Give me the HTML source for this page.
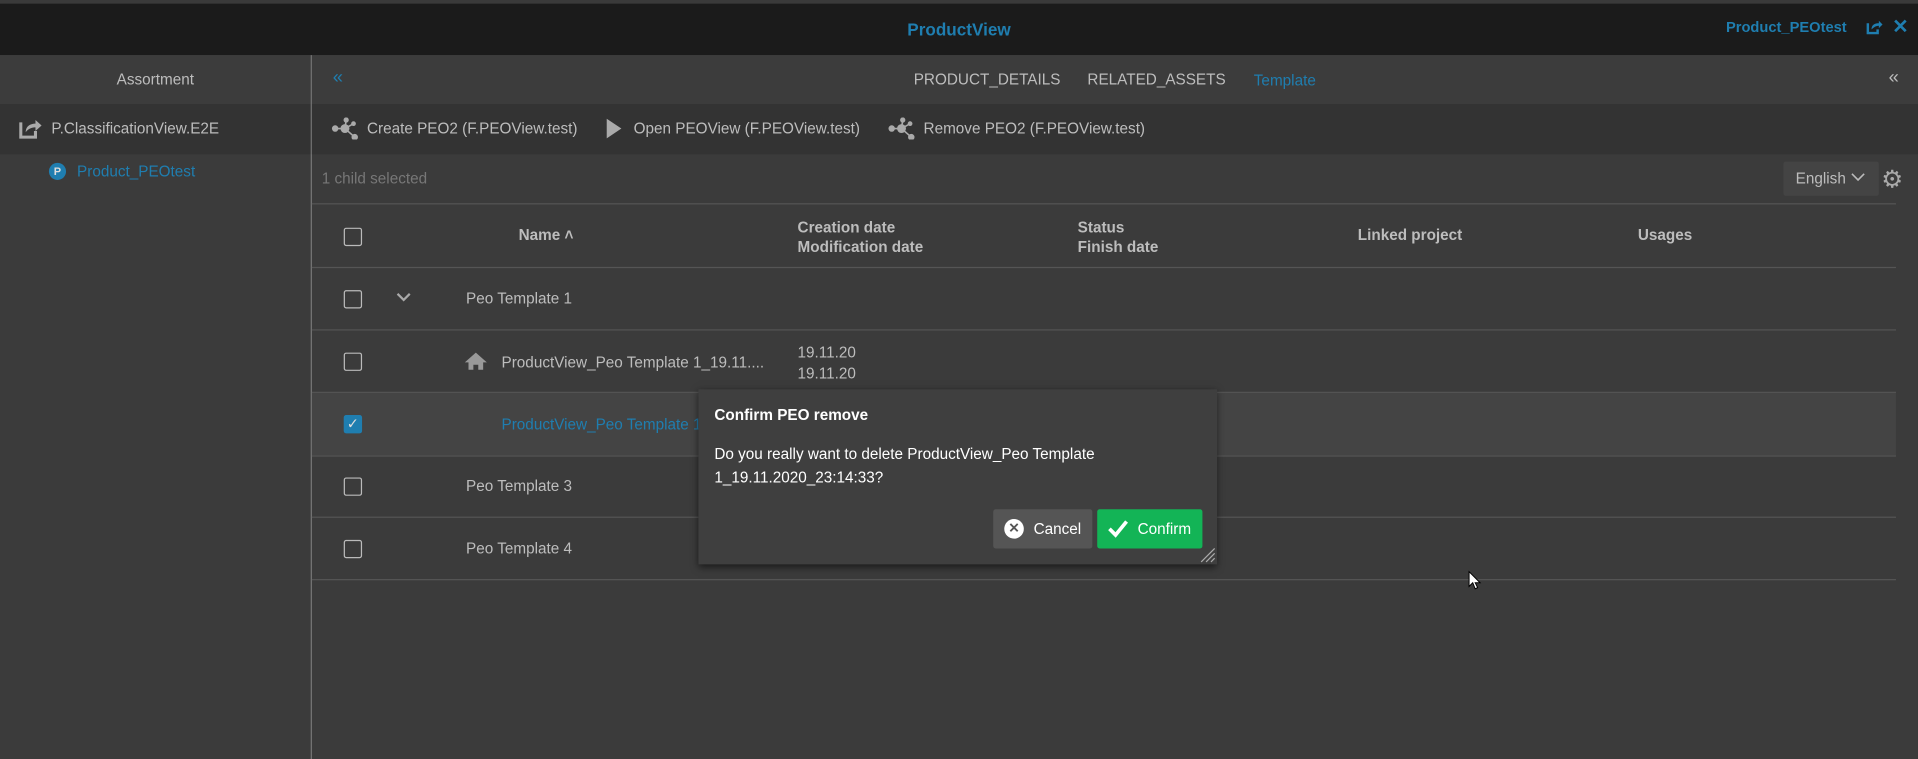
<!DOCTYPE html>
<html><head><meta charset="utf-8"><style>
html,body{margin:0;padding:0;width:1918px;height:759px;overflow:hidden;background:#3b3b3b;}
#w{position:absolute;left:0;top:0;width:1568px;height:620px;transform:scale(1.22321,1.2242);transform-origin:0 0;font-family:"Liberation Sans",sans-serif;font-size:12.5px;color:#bdbdbd;background:#3b3b3b;}
.a{position:absolute;}
.line{position:absolute;height:1px;background:#555;left:255px;width:1295px;}
.cb{position:absolute;width:13px;height:13px;border:1px solid #bbb;border-radius:2px;left:281px;}
.t{position:absolute;white-space:nowrap;}
</style></head><body><div id="w">
<div class="a" style="left:0;top:0;width:1568px;height:3px;background:#3a3a3a"></div>
<div class="a" style="left:0;top:3px;width:1568px;height:42px;background:#1b1b1b"></div>
<div class="t" style="left:0;width:1568px;top:16px;text-align:center;color:#1f7eb0;font-weight:bold;font-size:14px">ProductView</div>
<div class="t" style="left:1411px;top:15px;color:#1f7eb0;font-weight:bold;font-size:12px">Product_PEOtest</div>
<svg class="a" style="left:1525px;top:15px" width="14" height="14" viewBox="0 0 14 14"><path d="M2 4v8h8V9" fill="none" stroke="#1f7eb0" stroke-width="2"/><path d="M5 9c0-4 3-5 6-5V2l3 3-3 3V6c-2 0-4 1-6 3z" fill="#1f7eb0"/></svg>
<div class="t" style="left:1547px;top:12px;color:#1f7eb0;font-weight:bold;font-size:16px">✕</div>
<div class="a" style="left:0;top:45px;width:254px;height:40px;background:#3c3c3c"></div>
<div class="t" style="left:0;width:254px;top:58px;text-align:center">Assortment</div>
<div class="a" style="left:0;top:85px;width:254px;height:41px;background:#333"></div>
<svg class="a" style="left:15px;top:96px" width="20" height="18" viewBox="0 0 20 18"><path d="M2 4v12h12v-5" fill="none" stroke="#aaa" stroke-width="2.5"/><path d="M6 12c0-5 4-7 8-7V2l5 4.5-5 4.5V8c-3 0-6 1-8 4z" fill="#aaa"/></svg>
<div class="t" style="left:42px;top:98px">P.ClassificationView.E2E</div>
<div class="a" style="left:40px;top:133px;width:14px;height:14px;border-radius:50%;background:#1f7eb0;color:#ddd;font-size:9px;font-weight:bold;text-align:center;line-height:14px">P</div>
<div class="t" style="left:63px;top:133px;color:#1f7eb0">Product_PEOtest</div>
<div class="a" style="left:254px;top:45px;width:1px;height:575px;background:#777"></div>
<div class="a" style="left:255px;top:45px;width:1313px;height:40px;background:#3c3c3c"></div>
<div class="t" style="left:272px;top:55px;color:#1f7eb0;font-size:15px">«</div>
<div class="t" style="left:747px;top:58px">PRODUCT_DETAILS</div>
<div class="t" style="left:889px;top:58px">RELATED_ASSETS</div>
<div class="t" style="left:1025px;top:59px;color:#1f7eb0">Template</div>
<div class="t" style="left:1544px;top:55px;color:#bbb;font-size:15px">«</div>
<div class="a" style="left:255px;top:85px;width:1313px;height:41px;background:#333"></div>
<svg class="a" style="left:271px;top:96px" width="22" height="18" viewBox="0 0 22 18"><g fill="#aaa" stroke="#aaa" stroke-width="1.3"><circle cx="3" cy="9" r="2"/><circle cx="11" cy="9" r="3"/><circle cx="12" cy="2" r="1.5"/><circle cx="19" cy="16" r="2"/><circle cx="18" cy="5" r="1.3"/><path d="M3 9h8M11 9l1-7M11 9l8 7M11 9l7-4"/></g></svg>
<div class="t" style="left:300px;top:98px">Create PEO2 (F.PEOView.test)</div>
<svg class="a" style="left:495px;top:96px" width="14" height="18"><path d="M1 1l12 8-12 8z" fill="#aaa"/></svg>
<div class="t" style="left:518px;top:98px">Open PEOView (F.PEOView.test)</div>
<svg class="a" style="left:726px;top:96px" width="22" height="18" viewBox="0 0 22 18"><g fill="#aaa" stroke="#aaa" stroke-width="1.3"><circle cx="3" cy="9" r="2"/><circle cx="11" cy="9" r="3"/><circle cx="12" cy="2" r="1.5"/><circle cx="19" cy="16" r="2"/><circle cx="18" cy="5" r="1.3"/><path d="M3 9h8M11 9l1-7M11 9l8 7M11 9l7-4"/></g></svg>
<div class="t" style="left:755px;top:98px">Remove PEO2 (F.PEOView.test)</div>
<div class="t" style="left:263px;top:139px;color:#777">1 child selected</div>
<div class="a" style="left:1458px;top:132px;width:78px;height:28px;background:#444;border-radius:2px"></div>
<div class="t" style="left:1468px;top:139px">English</div>
<svg class="a" style="left:1513px;top:141px" width="12" height="8"><path d="M1 1l5 5 5-5" fill="none" stroke="#bbb" stroke-width="1.3"/></svg>
<div class="t" style="left:1538px;top:134px;color:#aaa;font-size:20px">⚙</div>
<div class="line" style="top:166px"></div>
<div class="cb" style="top:186px"></div>
<div class="t" style="left:424px;top:185px;font-weight:bold">Name ˄</div>
<div class="t" style="left:652px;top:178px;font-weight:bold;line-height:16px">Creation date<br>Modification date</div>
<div class="t" style="left:881px;top:178px;font-weight:bold;line-height:16px">Status<br>Finish date</div>
<div class="t" style="left:1110px;top:185px;font-weight:bold">Linked project</div>
<div class="t" style="left:1339px;top:185px;font-weight:bold">Usages</div>
<div class="line" style="top:218px"></div>
<div class="cb" style="top:237px"></div>
<svg class="a" style="left:324px;top:239px" width="12" height="8"><path d="M1 1l5 5 5-5" fill="none" stroke="#aaa" stroke-width="1.8"/></svg>
<div class="t" style="left:381px;top:237px">Peo Template 1</div>
<div class="line" style="top:269px"></div>
<div class="cb" style="top:288px"></div>
<svg class="a" style="left:379px;top:287px" width="20" height="16"><path d="M10 1L1 9h3v6h4v-4h4v4h4V9h3z" fill="#999"/></svg>
<div class="t" style="left:410px;top:289px">ProductView_Peo Template 1_19.11....</div>
<div class="t" style="left:652px;top:280px;line-height:17px">19.11.20<br>19.11.20</div>
<div class="line" style="top:320px"></div>
<div class="a" style="left:255px;top:321px;width:1295px;height:51px;background:#444"></div>
<div class="a" style="left:281px;top:339px;width:15px;height:15px;background:#1f7eb0;border-radius:2px;color:#ddd;font-size:12px;text-align:center;line-height:15px">✓</div>
<div class="t" style="left:410px;top:340px;color:#1f7eb0">ProductView_Peo Template 1</div>
<div class="line" style="top:372px"></div>
<div class="cb" style="top:390px"></div>
<div class="t" style="left:381px;top:390px">Peo Template 3</div>
<div class="line" style="top:422px"></div>
<div class="cb" style="top:441px"></div>
<div class="t" style="left:381px;top:441px">Peo Template 4</div>
<div class="line" style="top:473px"></div>
<div class="a" style="left:571px;top:318px;width:424px;height:143px;background:#3f3f3f;box-shadow:0 2px 6px rgba(0,0,0,.6)"></div>
<div class="t" style="left:584px;top:332px;color:#fff;font-weight:bold">Confirm PEO remove</div>
<div class="t" style="left:584px;top:362px;color:#fff;line-height:19px">Do you really want to delete ProductView_Peo Template<br>1_19.11.2020_23:14:33?</div>
<div class="a" style="left:812px;top:416px;width:81px;height:32px;background:#555;border-radius:2px"></div>
<div class="a" style="left:821px;top:424px;width:16px;height:16px;border-radius:50%;background:#fff;color:#555;font-size:11px;font-weight:bold;text-align:center;line-height:16px">✕</div>
<div class="t" style="left:845px;top:425px;color:#fff">Cancel</div>
<div class="a" style="left:897px;top:416px;width:86px;height:32px;background:#13b456;border-radius:2px"></div>
<svg class="a" style="left:905px;top:424px" width="18" height="16"><path d="M2 8l5 5 9-11" fill="none" stroke="#fff" stroke-width="3"/></svg>
<div class="t" style="left:930px;top:425px;color:#fff">Confirm</div>
<svg class="a" style="left:980px;top:446px" width="14" height="14"><path d="M13 2L2 13M13 6L6 13M13 10L10 13" stroke="#aaa" stroke-width="1"/></svg>
<svg class="a" style="left:1200px;top:466px" width="12" height="16"><path d="M1 1v12l3-3 2 5 2-1-2-4h4z" fill="#fff" stroke="#000" stroke-width=".8"/></svg>
</div></body></html>
